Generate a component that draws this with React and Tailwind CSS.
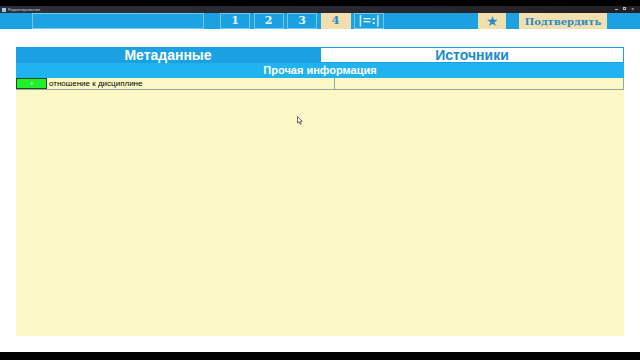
import React from 'react';

const tabs = ['1', '2', '3', '4', '|=:|'];

function TitleBar() {
  return (
    <div className="h-[13px] flex flex-col">
      <div className="h-[6px] bg-black" />
      <div className="h-[7px] bg-gradient-to-r from-[#2b2f3a] via-[#2a2830] to-[#231f24] flex items-center px-[2px]">
        <div className="w-[4px] h-[4px] bg-[#9ec8e8] mr-[2px]" />
        <span className="text-[4px] leading-none text-[#c8d0dc]">Редактирование</span>
        <div className="ml-auto flex gap-[5px] pr-[4px]">
          <span className="w-[3px] h-[1px] bg-[#bbb] mt-[2px]" />
          <span className="w-[3px] h-[3px] border border-[#bbb]" />
          <span className="text-[5px] leading-none text-[#ccc]">×</span>
        </div>
      </div>
    </div>
  );
}

function Toolbar() {
  return (
    <div className="h-[16px] bg-[#1ba1e2] flex items-stretch" style={{ fontFamily: '"DejaVu Serif", "Liberation Serif", serif' }}>
      <div className="ml-[32px] w-[172px] border border-[#74c8ee] bg-[#1ca3e3]" />
      <div className="ml-[16px] flex gap-[3.5px]">
        {tabs.map((t) => (
          <div
            key={t}
            className={
              t === '4'
                ? 'w-[30px] bg-[#f2dfae] text-[#2c8cc4] border border-[#f2dfae] flex items-center justify-center text-[11px] font-bold'
                : 'w-[30px] border border-[#74c8ee] text-[#e8f6fd] flex items-center justify-center text-[11px] font-bold'
            }
          >
            {t}
          </div>
        ))}
      </div>
      <div className="ml-[94px] w-[28px] bg-[#f2dfae] flex items-center justify-center text-[#2c8cc4] text-[14px] leading-none">★</div>
      <div className="ml-[13px] w-[88px] bg-[#f2dfae] flex items-center justify-center text-[#2c8cc4] text-[10px] font-bold">
        Подтвердить
      </div>
    </div>
  );
}

function Table() {
  return (
    <div className="mx-[16px] mt-[18px] flex flex-col" style={{ fontFamily: '"Liberation Sans", Arial, sans-serif' }}>
      <div className="h-[16px] flex">
        <div className="w-[304px] bg-[#1ba1e2] text-white text-[14px] font-bold flex items-center justify-center">
          Метаданные
        </div>
        <div className="flex-1 bg-white border border-[#1ba1e2] text-[#1a8acb] text-[14px] font-bold flex items-center justify-center">
          Источники
        </div>
      </div>
      <div className="h-[15px] bg-[#21b3ef] text-white text-[11px] font-bold flex items-center justify-center">
        Прочая информация
      </div>
      <div className="h-[258px] bg-[#fcf8c5] relative">
        <div className="h-[12px] flex border-b border-[#8fa7a8]">
          <div className="w-[31px] bg-[#22ee2a] border border-[#1f4d22] flex items-center justify-center text-[7px] text-[#d8ffd8] leading-none">
            +
          </div>
          <div className="w-[288px] border-r border-[#8fa7a8] pl-[2px] text-[8px] leading-[12px] text-black">
            отношение к дисциплине
          </div>
          <div className="flex-1 border-r border-[#8fa7a8]" />
        </div>
        <svg className="absolute left-[281px] top-[38px]" width="6" height="9" viewBox="0 0 6 9">
          <path d="M0.5 0.5 L0.5 7 L2 5.6 L3.2 8.3 L4.2 7.9 L3.1 5.3 L5.2 5.3 Z" fill="#fff" stroke="#333" strokeWidth="0.7" />
        </svg>
      </div>
    </div>
  );
}

export default function App() {
  return (
    <div className="w-[640px] h-[360px] bg-white flex flex-col overflow-hidden">
      <TitleBar />
      <Toolbar />
      <Table />
      <div className="flex-1" />
      <div className="h-[8px] bg-black" />
    </div>
  );
}
